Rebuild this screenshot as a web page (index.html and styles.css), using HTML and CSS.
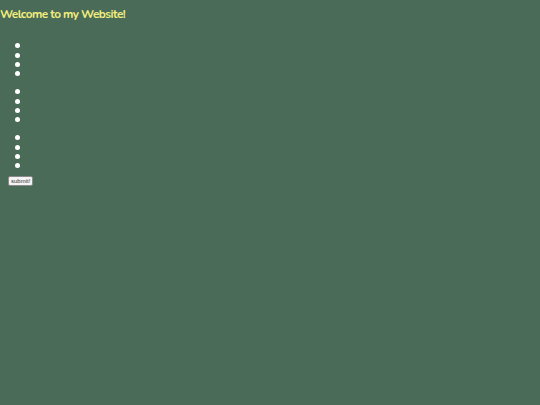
FILE: index.html
```html
<!DOCTYPE html>
<html>
<head>
<meta charset="utf-8">
<link rel="stylesheet" href="styles.css">
</head>
<body>
<h1 class="title">Welcome to my Website!</h1>
<ul class="list first">
<li></li><li></li><li></li><li></li>
</ul>
<ul class="list">
<li></li><li></li><li></li><li></li>
</ul>
<ul class="list last">
<li></li><li></li><li></li><li></li>
</ul>
<form class="form"><button type="button" class="btn">submit!</button></form>
</body>
</html>
```
FILE: styles.css
```css
html, body {
  margin: 0;
  padding: 0;
  background: #4a6b57;
  height: 100%;
}
.title {
  font-family: "Nunito", "Open Sans", "Lato", sans-serif;
  font-size: 11.8px;
  font-weight: 700;
  letter-spacing: -0.55px;
  color: #f2ee7e;
  margin: 0;
  padding-top: 6px;
  line-height: 16px;
}
.list {
  margin: 8.67px 0;
  padding: 0 0 0 15px;
  list-style: none;
}
.list.first {
  margin-top: 19.33px;
}
.list.last {
  margin-bottom: 5px;
}
.list li {
  height: 9.33px;
  display: flex;
  align-items: center;
}
.list li::before {
  content: "";
  width: 5px;
  height: 5px;
  border-radius: 50%;
  background: #ffffff;
}
.form {
  margin: 0;
  padding-left: 8px;
}
.btn {
  font-family: "Liberation Sans", Arial, sans-serif;
  font-size: 6px;
  padding: 1px 2px;
  background: #f4f4f4;
  border: 1px solid #8a8a8a;
  border-radius: 2px;
  color: #333;
  line-height: 6px;
  display: block;
}
```
